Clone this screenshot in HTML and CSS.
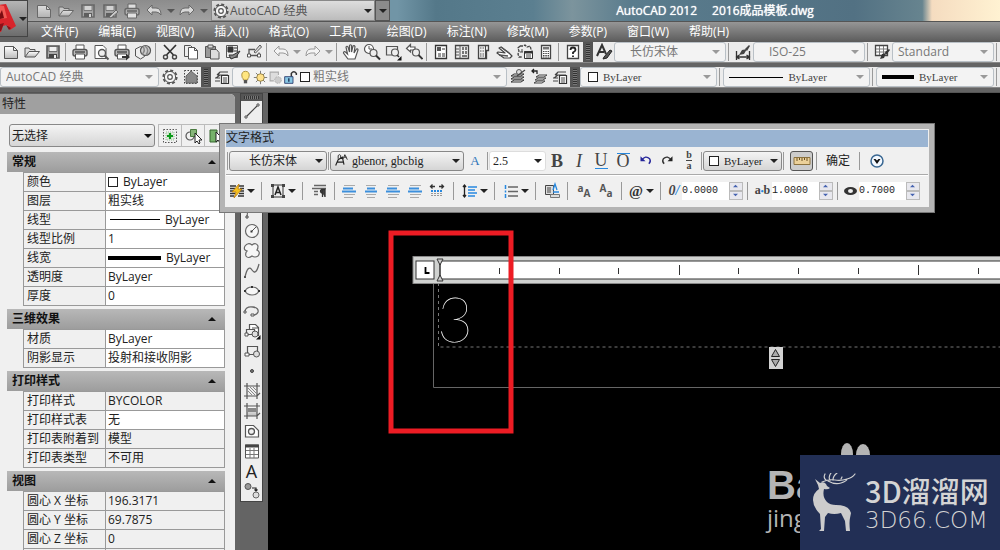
FILE: index.html
```html
<!DOCTYPE html>
<html lang="zh-CN">
<head>
<meta charset="utf-8">
<title>AutoCAD 2012 - 2016成品模板.dwg</title>
<link rel="stylesheet" href="styles.css">
</head>
<body>
<svg class="defs" aria-hidden="true">
  <defs>
    <linearGradient id="gGray" x1="0" y1="0" x2="0" y2="1"><stop offset="0" stop-color="#fff"/><stop offset="1" stop-color="#bbb"/></linearGradient>
  </defs>
  <symbol id="new" viewBox="0 0 18 18"><path d="M2.500 3.500h9l4 4v8h-13z" fill="url(#gGray)" stroke="currentColor"/><path d="M11.500 3.500v4h4" fill="none" stroke="currentColor"/></symbol>
  <symbol id="open" viewBox="0 0 18 18"><path d="M2 14V5h4l1 1.500h5V9" fill="#ddd" stroke="currentColor"/><path d="M2 14l4-5.500h10.500L12 14z" fill="url(#gGray)" stroke="currentColor"/></symbol>
  <symbol id="save" viewBox="0 0 18 18"><path d="M3 3h12v12H3z" fill="#aaa" stroke="currentColor" stroke-width="1.600"/><path d="M5 3.500h8v5H5z" fill="#eee" stroke="currentColor" stroke-width=".8"/><path d="M5 11h8v4H5z" fill="#444"/><path d="M10 12h2v3h-2z" fill="#eee"/></symbol>
  <symbol id="saveas" viewBox="0 0 18 18"><use href="#save"/><path d="M8 15l7-7 2 2-7 6z" fill="#ddd" stroke="currentColor"/></symbol>
  <symbol id="print" viewBox="0 0 18 18"><path d="M5 7V2h8v5" fill="#fff" stroke="currentColor"/><rect x="2" y="6.500" width="14" height="6.500" rx="2" fill="#bbb" stroke="currentColor" stroke-width="1.400"/><path d="M4.500 11h9v5h-9z" fill="#fff" stroke="currentColor"/><path d="M4 9h10" stroke="currentColor" stroke-width="1.600"/></symbol>
  <symbol id="preview" viewBox="0 0 18 18"><path d="M3 2.500h8l3 3v10H3z" fill="#fff" stroke="currentColor"/><circle cx="10" cy="10" r="3.500" fill="#eee" stroke="currentColor" stroke-width="1.300"/><path d="M12.500 12.500l4 4" stroke="currentColor" stroke-width="2"/></symbol>
  <symbol id="plot" viewBox="0 0 18 18"><use href="#print"/><path d="M9 13h4v-2.500l4 3.500-4 3.500V15H9z" fill="#333"/></symbol>
  <symbol id="globe" viewBox="0 0 18 18"><path d="M1.500 6l5-2.500 4 2v8l-4 2.500-5-3z" fill="#eee" stroke="currentColor"/><circle cx="11.500" cy="7.500" r="5" fill="#ccc" stroke="currentColor" stroke-width="1.200"/><path d="M9 3.500q3 4-1 8M11 3q5 4 1 9" fill="none" stroke="#888" stroke-width="1.500"/></symbol>
  <symbol id="cut" viewBox="0 0 18 18"><path d="M3 2l9.500 10M15 2L5.500 12" stroke="#333" stroke-width="1.700"/><circle cx="4.500" cy="14" r="2" fill="none" stroke="#444" stroke-width="1.400"/><circle cx="13.500" cy="14" r="2" fill="none" stroke="#444" stroke-width="1.400"/></symbol>
  <symbol id="copy" viewBox="0 0 18 18"><path d="M2.500 2.500h6l3 3v8h-9z" fill="#eee" stroke="currentColor"/><path d="M6.500 4.500h6l3 3v8.500h-9z" fill="#fff" stroke="currentColor"/><path d="M12.500 4.500v3h3" fill="none" stroke="currentColor"/></symbol>
  <symbol id="paste" viewBox="0 0 18 18"><path d="M2.500 3.500h10v11h-10z" fill="#999" stroke="currentColor"/><path d="M5 2h5v3H5z" fill="#ddd" stroke="currentColor"/><path d="M7.500 6.500h6l2.500 3v6.500H7.500z" fill="#ddd" stroke="currentColor"/></symbol>
  <symbol id="match" viewBox="0 0 18 18"><path d="M2.500 2.500h11v12h-11z" fill="#eee" stroke="currentColor"/><path d="M4 4h5v5H4zM10 5h3M10 8h3" fill="#333" stroke="#333"/><path d="M5 12h4l7-4-4 6-5 2z" fill="#888" stroke="#333"/></symbol>
  <symbol id="block" viewBox="0 0 18 18"><path d="M10 6.500H4v6h10v-3" fill="none" stroke="currentColor" stroke-width="1.300"/><path d="M2.500 11h3v3h-3zM12.500 11h3v3h-3z" fill="#fff" stroke="currentColor"/><path d="M9 9l6-7 1.500 2-6 6z" fill="#ddd" stroke="currentColor"/></symbol>
  <symbol id="undo" viewBox="0 0 18 18"><path d="M2 8l5-5v3h4q5 0 5 7-2-3-5-3H7v3z" fill="#f4f4f4" stroke="currentColor" stroke-linejoin="round"/></symbol>
  <symbol id="redo" viewBox="0 0 18 18"><path d="M16 8l-5-5v3H7q-5 0-5 7 2-3 5-3h4v3z" fill="#f4f4f4" stroke="currentColor" stroke-linejoin="round"/></symbol>
  <symbol id="hand" viewBox="0 0 18 18"><path d="M6 16l-4.500-6q0-2 2-1l2 2L4 4q1-1.500 2 0l1.500 5V2.500q1-1.500 2 0V9L11 3q1-1 2 .5L12 10l2.500-4q1.500-.5 1.500 1L13 16z" fill="#fff" stroke="currentColor" stroke-width="1.200"/></symbol>
  <symbol id="zoomrt" viewBox="0 0 18 18"><circle cx="6" cy="6" r="4.500" fill="#fff" stroke="currentColor" stroke-width="1.200"/><path d="M6 3v3h3" fill="none" stroke="currentColor"/><circle cx="10.500" cy="10" r="3.500" fill="#eee" stroke="currentColor" stroke-width="1.200"/><path d="M13 12.500l4 4" stroke="#333" stroke-width="2"/></symbol>
  <symbol id="zoomwin" viewBox="0 0 18 18"><path d="M8 12H2.500V3.500h11V7" fill="none" stroke="currentColor" stroke-width="1.200"/><circle cx="11" cy="9.500" r="3.500" fill="#eee" stroke="currentColor" stroke-width="1.200"/><path d="M13 12l2 2" stroke="#333" stroke-width="1.600"/><path d="M17.500 13v4.500H13z" fill="#111"/></symbol>
  <symbol id="zoomprev" viewBox="0 0 18 18"><path d="M1.500 5.500l4-4V4H10v3H5.500v2z" fill="#fff" stroke="currentColor" stroke-width="1.200"/><circle cx="11" cy="9.500" r="3.500" fill="#eee" stroke="currentColor" stroke-width="1.200"/><path d="M13.500 12l4 4" stroke="#333" stroke-width="1.800"/></symbol>
  <symbol id="props" viewBox="0 0 18 18"><path d="M3.500 2.500h11v13h-11z" fill="#fff" stroke="#333" stroke-width="1.300"/><path d="M5 4h4v4H5z" fill="#555"/><path d="M10 6h3M6 11h3M10 11h3M6 13h3M10 13h3" stroke="#333"/></symbol>
  <symbol id="dcenter" viewBox="0 0 18 18"><path d="M2.500 2.500h13v13h-13z" fill="#eee" stroke="#444" stroke-width="1.300"/><path d="M7 3v12M3 6h3M3 9h3M3 12h3" stroke="#555"/><path d="M9 4h2v3H9zM12 4h2v3h-2zM9 8h2v3H9zM12 8h2v3h-2zM9 12h5v2H9z" fill="#777"/></symbol>
  <symbol id="palettes" viewBox="0 0 18 18"><path d="M4.500 2.500h10v5h-2v8h-8z" fill="#eee" stroke="#444" stroke-width="1.300"/><path d="M6 5h5M6 8h5M6 11h5M6 13h5" stroke="#555" stroke-dasharray="1.500 1"/><path d="M11.500 3v12" stroke="#444"/></symbol>
  <symbol id="sheet" viewBox="0 0 18 18"><path d="M2 10l7 5h6l2-2-3-3-8-6-2 1 6 5-7-1z" fill="#fff" stroke="#444" stroke-width="1.200" stroke-linejoin="round"/><path d="M6 4l8 6M4 12l9 1" stroke="#555" stroke-width="1.500"/></symbol>
  <symbol id="markup" viewBox="0 0 18 18"><path d="M4 3h3l2-1 2 2 3-1 1 3 1 2-1 2M4 3L2 5l1 3-1 3 1 3h3" fill="none" stroke="#444" stroke-width="1.300" stroke-dasharray="3 1"/><path d="M8.500 8.500h8v7h-8z" fill="#fff" stroke="#333"/><path d="M8 9.500h9" stroke="#333" stroke-width="2"/><path d="M10 12h5M10 14h5M4 9h3M6 6v3" stroke="#444"/></symbol>
  <symbol id="calc" viewBox="0 0 18 18"><path d="M4.500 2.500h9v13h-9z" fill="#fff" stroke="#444" stroke-width="1.300"/><path d="M6 4h6v2.500H6z" fill="#777"/><path d="M6 8.500h6M6 10.500h6M6 12.500h6M6 14h6" stroke="#444" stroke-width="1.200" stroke-dasharray="1.500 .8"/></symbol>
  <symbol id="help" viewBox="0 0 18 18"><path d="M3.500 2.500h11v13h-11z" fill="#fff" stroke="#444" stroke-width="1.300"/><path d="M6.500 7q0-2.500 2.500-2.500T11.500 7Q11.500 8 9 9.500V11M9 12.500V14" fill="none" stroke="#222" stroke-width="1.800"/></symbol>
  <symbol id="brushA" viewBox="0 0 18 18"><path d="M2 13L7 2l4 9M4 9h5" fill="none" stroke="#333" stroke-width="2"/><path d="M9 14l6-7 2 1-5 7-4 1z" fill="#555" stroke="#222"/></symbol>
  <symbol id="dimstyle" viewBox="0 0 18 18"><path d="M2.500 8v9M15.500 8v9M3 14h12M5.500 12l-3 2 3 2M12.500 12l3 2-3 2" fill="none" stroke="#333" stroke-width="1.300"/><path d="M5 12l3-5 5-1-3 5zM11 6l4-4 1 1-3 5z" fill="#444"/></symbol>
  <symbol id="tabstyle" viewBox="0 0 18 18"><path d="M2.500 2.500h12v10h-12z" fill="#fff" stroke="#444" stroke-width="1.300"/><path d="M3 6h11M3 9h11M6.500 3v9M10.500 3v9" stroke="#777"/><path d="M7 16l2-5 4-1-2 5zM12 9l4-3 1 1-4 5z" fill="#333"/></symbol>
  <symbol id="gear" viewBox="0 0 18 18"><circle cx="9" cy="9" r="6.600" fill="none" stroke="currentColor" stroke-width="2" stroke-dasharray="3 2.180"/><circle cx="9" cy="9" r="5.600" fill="#f4f4f4" stroke="currentColor"/><circle cx="9" cy="9" r="2.300" fill="#fff" stroke="currentColor" stroke-width="1.200"/></symbol>
  <symbol id="wshome" viewBox="0 0 18 18"><path d="M2.500 2.500h13v13h-13z" fill="none" stroke="#444" stroke-dasharray="1.500 1.500"/><path d="M4 8l5-5 6 5v7H4z" fill="#888" stroke="#666"/></symbol>
  <symbol id="layers" viewBox="0 0 18 18"><path d="M2 13h5M3 10l4-3h8M2 10h5M4 7l3-3h8M4 7h4M7 4L5 7" fill="none" stroke="#444" stroke-width="1.200"/><path d="M8.500 7.500h7v8h-7z" fill="#fff" stroke="#333" stroke-width="1.200"/><path d="M10 10h4M10 12h4M10 14h4" stroke="#444"/></symbol>
  <symbol id="layprev" viewBox="0 0 18 18"><path d="M2 8l3-2h10l-3 2zM2 11l3-2h10l-3 2zM2 14l3-2h10l-3 2z" fill="#eee" stroke="#333"/><circle cx="10" cy="4" r="2.500" fill="#ddd" stroke="#555"/><path d="M8 8l8-6" stroke="#444" stroke-width="1.200"/></symbol>
  <symbol id="layback" viewBox="0 0 18 18"><path d="M6 9l3-2h8l-3 2zM5 12l3-2h8l-3 2zM4 15l3-2h8l-3 2z" fill="#eee" stroke="#444"/><path d="M2 3h5v3M4 1L2 3l2 2" fill="none" stroke="#222" stroke-width="1.300"/></symbol>
  <symbol id="bulb" viewBox="0 0 18 18"><path d="M6.500 12Q6.500 10.500 5 9 3 2 9 1.500 15 2 13 9 11.500 10.500 11.500 12z" fill="#ffe680" stroke="#a08430"/><path d="M7 12h4v4H7z" fill="#555"/></symbol>
  <symbol id="sun" viewBox="0 0 18 18"><path d="M9 1v16M1 9h16M3.500 3.500l11 11M14.500 3.500l-11 11" stroke="#666"/><circle cx="9" cy="9" r="4.500" fill="#ffe18a" stroke="#8a7638"/></symbol>
  <symbol id="vp" viewBox="0 0 18 18"><path d="M7 13H2.500V2.500h10V6" fill="#ddd" stroke="#aaa" stroke-width="1.300"/><circle cx="12" cy="12" r="4" fill="#ccc" stroke="#aaa" stroke-dasharray="2 1"/></symbol>
  <symbol id="lock" viewBox="0 0 18 18"><path d="M10 8V4q3-4 6 0v2" fill="none" stroke="#333" stroke-width="1.800"/><path d="M2 8h10v8H2z" fill="#87c6e4" stroke="#236"/><path d="M7 10v4" stroke="#124" stroke-width="1.500"/></symbol>
  <symbol id="down" viewBox="0 0 8 6"><path d="M0 1h8L4 5z" fill="currentColor"/></symbol>
  <symbol id="up" viewBox="0 0 8 6"><path d="M0 5h8L4 1z" fill="currentColor"/></symbol>
  <symbol id="line" viewBox="0 0 18 18"><path d="M4 14L14 4" stroke="#444" stroke-width="1.200"/><path d="M2 14h2v2H2zM14 2h2v2h-2z" fill="#fff" stroke="#555"/></symbol>
  <symbol id="box" viewBox="0 0 18 18"><path d="M4 4h10v10H4z" fill="none" stroke="#444"/><path d="M3 13h2v2H3z" fill="#fff" stroke="#444"/></symbol>
  <symbol id="arc" viewBox="0 0 18 18"><path d="M4 14Q4 4 14 3" fill="none" stroke="#555"/><path d="M3 14h2v2H3z" fill="#fff" stroke="#444"/></symbol>
  <symbol id="circle" viewBox="0 0 18 18"><circle cx="9" cy="9" r="6.500" fill="#f6f6f6" stroke="#666" stroke-width="1.200"/><path d="M9 9l4-4" stroke="#555"/><path d="M7.500 8.500h2v2h-2z" fill="#333"/></symbol>
  <symbol id="cloud" viewBox="0 0 18 18"><path d="M9 3q4-3 6 1 0 3-1 4 4 2 1 6-3 2-6 0-4 3-6 0-1-3 1-5-4-1-2-5 3-4 7-1z" fill="#f6f6f6" stroke="#666" stroke-width="1.200"/></symbol>
  <symbol id="spline" viewBox="0 0 18 18"><path d="M2 15Q5 2 9 8t7-6" fill="none" stroke="#666" stroke-width="1.300"/><path d="M1 14h2v2H1z" fill="#555"/></symbol>
  <symbol id="ellipse" viewBox="0 0 18 18"><ellipse cx="9" cy="9" rx="6.500" ry="4" fill="#f6f6f6" stroke="#666" stroke-width="1.200"/><path d="M1 8h2v2H1zM15 8h2v2h-2zM8 4h2v2H8z" fill="#333"/></symbol>
  <symbol id="earc" viewBox="0 0 18 18"><path d="M2 9Q3 4 10 5q6 1 5 5-1 3-5 3" fill="none" stroke="#666" stroke-width="1.300"/><path d="M1 9h2v2H1zM8 12h3v2H8z" fill="#fff" stroke="#555"/></symbol>
  <symbol id="insert" viewBox="0 0 18 18"><path d="M6.500 7V2.500h6l3 3V14M9 6h6" fill="#fff" stroke="#555" stroke-width="1.200"/><path d="M3.500 7.500h8v5h-8z" fill="#eee" stroke="#555" stroke-width="1.200"/><path d="M2 11h3v3H2z" fill="#fff" stroke="#555"/><circle cx="12" cy="12" r="3" fill="#ddd" stroke="#555"/><path d="M17.500 13v4.500H13z" fill="#111"/></symbol>
  <symbol id="makeblk" viewBox="0 0 18 18"><path d="M4.500 4.500h10v8h-10z" fill="#eee" stroke="#555" stroke-width="1.200"/><path d="M2 11h4v3H2z" fill="#fff" stroke="#555"/><circle cx="13.500" cy="12" r="3" fill="#ddd" stroke="#555"/></symbol>
  <symbol id="point" viewBox="0 0 18 18"><circle cx="9" cy="9" r="1.500" fill="#777" stroke="#444"/></symbol>
  <symbol id="hatch" viewBox="0 0 18 18"><path d="M1 4h16M4 1v16M1 14h13l3-3M14 1v16" fill="none" stroke="#555" stroke-width="1.200"/><path d="M5 6l7 7M5 9l4 4M7 5l7 7M10 5l4 4" stroke="#888"/></symbol>
  <symbol id="gradient" viewBox="0 0 18 18"><path d="M4 4h10v10H4z" fill="url(#gGray)"/><path d="M5 6h8v4H5z" fill="#888"/><path d="M1 4h16M4 1v16M1 14h13l3-3M14 1v16" fill="none" stroke="#555" stroke-width="1.200"/></symbol>
  <symbol id="region" viewBox="0 0 18 18"><path d="M2.500 3.500h8l5 5V15h-13z" fill="#fff" stroke="#555" stroke-width="1.200"/><circle cx="8.500" cy="9.500" r="3" fill="#f0f0f0" stroke="#555" stroke-width="1.300"/></symbol>
  <symbol id="table" viewBox="0 0 18 18"><path d="M2.500 3v13h13V3z" fill="#fff" stroke="#555"/><path d="M2 4h14" stroke="#444" stroke-width="3"/><path d="M3 8.500h12M3 12.500h12M7 6v10M11 6v10" stroke="#777"/></symbol>
  <symbol id="addsel" viewBox="0 0 18 18"><circle cx="5" cy="4.500" r="3" fill="#999" stroke="#555"/><circle cx="13" cy="13" r="3" fill="#ddd" stroke="#666"/><path d="M9 6h4v3M11.500 7.500L13 9l1.500-1.500" fill="none" stroke="#222" stroke-width="1.200"/></symbol>
  <symbol id="pickadd" viewBox="0 0 18 18"><path d="M2.500 2.500h13v13h-13z" fill="none" stroke="#555" stroke-dasharray="1.500 1.500"/><path d="M5 5h8v8H5z" fill="#dfeadb" stroke="#9b9" stroke-dasharray="1 1"/><path d="M9 6v6M6 9h6" stroke="#0a9a18" stroke-width="2.200"/></symbol>
  <symbol id="selobj" viewBox="0 0 18 18"><circle cx="6" cy="9" r="4" fill="none" stroke="#555" stroke-width="1.200"/><path d="M6.500 2.500h6v7h-6z" fill="#86b679" stroke="#4a7a40"/><path d="M11 6v10l2-2 2 3 1-1-1-3h3z" fill="#fff" stroke="#222"/></symbol>
  <symbol id="qsel" viewBox="0 0 18 18"><path d="M3 3h7v12H3z" fill="#76b26a" stroke="#37682e"/><path d="M9 5v10l2-2 2 3 1-1-1-3h3z" fill="#fff" stroke="#222"/><path d="M13 2l3 3" stroke="#e8932a" stroke-width="2"/></symbol>
  <symbol id="bolt" viewBox="0 0 18 18"><path d="M2 4h6M11 4h5M2 6.500h5M12 6.500h4M2 9h4M12 9h4M2 11.500h5M11 11.500h5M2 14h4M10 14h6" stroke="#333" stroke-width="1.500"/><path d="M11 2L4 10h4l-2 6 8-9h-4z" fill="#f5c11e" stroke="#b8780b" stroke-width=".8"/></symbol>
  <symbol id="frameA" viewBox="0 0 18 18"><path d="M4 3h10v12H4z" fill="#eee" stroke="#333"/><path d="M2 2h3v3H2zM13 2h3v3h-3zM2 13h3v3H2zM13 13h3v3h-3z" fill="#444"/><path d="M6 13l3-8 3 8M7 10.500h4" fill="none" stroke="#222" stroke-width="1.500"/></symbol>
  <symbol id="para" viewBox="0 0 18 18"><path d="M4 3.500h12M2 6.500h14M4 9.500h4M4 12.500h4" stroke="#666" stroke-width="1.300"/><path d="M12.500 15V8M15 15V7.500h-3.500q-2.500 2 1 4" fill="#444" stroke="#333" stroke-width="1.300"/></symbol>
  <symbol id="al-l" viewBox="0 0 18 18"><path d="M4 3.500h11M4 12.500h11M4 15.500h9" stroke="#aaa" stroke-width="1.200"/><path d="M3 6.500h10M2 9.500h14" stroke="#3c8fdc" stroke-width="1.800"/></symbol>
  <symbol id="al-c" viewBox="0 0 18 18"><path d="M4 3.500h10M4 12.500h10M5 15.500h8" stroke="#aaa" stroke-width="1.200"/><path d="M5 6.500h8M3 9.500h12" stroke="#3c8fdc" stroke-width="1.800"/></symbol>
  <symbol id="dist" viewBox="0 0 18 18"><path d="M3 4.500h4M11 4.500h4M4.500 2.500l-2 2 2 2M13.500 2.500l2 2-2 2" fill="none" stroke="#333" stroke-width="1.300"/><path d="M3 9h12" stroke="#2788df" stroke-width="2" stroke-dasharray="2 1"/><path d="M3 11.500h12M3 13.500h12" stroke="#999" stroke-dasharray="2 1"/></symbol>
  <symbol id="spacing" viewBox="0 0 18 18"><path d="M3.500 4v10M2 5l1.500-2L5 5M2 13l1.500 2L5 13" fill="none" stroke="#222" stroke-width="1.300"/><path d="M7 5h9M7 8h7M7 11h9M7 14h7" stroke="#2788df" stroke-width="1.300"/></symbol>
  <symbol id="list" viewBox="0 0 18 18"><path d="M3.500 3v4M3.500 8.500v2M3.500 12v4" stroke="#2788df" stroke-width="1.500"/><path d="M6 5h10M6 9.500h10M6 14h10" stroke="#666" stroke-width="1.300"/></symbol>
  <symbol id="field" viewBox="0 0 18 18"><path d="M2.500 3.500h8v9h-8z" fill="#ddd" stroke="#444"/><path d="M4 6h4M4 8h4M4 10h4" stroke="#444"/><path d="M10 8l2-6 2 6M10 10h6" fill="none" stroke="#2788df" stroke-width="1.300"/><path d="M7.500 12.500h9v3h-9z" fill="#ddd" stroke="#777"/></symbol>
  <symbol id="curvel" viewBox="0 0 18 18"><path d="M4 9Q9 2 14 7q2 3-1 6" fill="none" stroke="#25259a" stroke-width="1.600"/><path d="M3 4v6h6z" fill="#25259a"/></symbol>
  <symbol id="curver" viewBox="0 0 18 18"><path d="M14 9Q9 2 4 7q-2 3 1 6" fill="none" stroke="#333" stroke-width="1.600"/><path d="M15 4v6H9z" fill="#222"/></symbol>
  <symbol id="ruler" viewBox="0 0 18 18"><path d="M1 5.500h16v7H1z" fill="#ecd19a" stroke="#8c7340"/><path d="M4 6v3M6.500 6v2M9 6v3M11.500 6v2M14 6v3" stroke="#6a5224"/></symbol>
  <symbol id="opts" viewBox="0 0 18 18"><circle cx="9" cy="9" r="6" fill="#f4f9ff" stroke="#396792" stroke-width="1.500"/><path d="M5.500 7h2L9 8.500 10.500 7h2L9 12z" fill="#111"/></symbol>
  <symbol id="shx" viewBox="0 0 18 18"><path d="M2 15q2-5 3-7l5-3 2 9M4 11h7" fill="none" stroke="#222" stroke-width="1.400"/><path d="M5 7V3q2-2 3 0v3M11 7l2-5 3 6M12 5h3" fill="none" stroke="#333" stroke-width="1.200"/></symbol>
</svg>

<header class="top">
  <button class="logo" aria-label="应用程序菜单">
    <svg class="logo-a" viewBox="0 0 16 36" aria-hidden="true"><path d="M-8 31L-1 4l7-1 10 22-6 4-3-5-4 1-2 6z" fill="#d8242b"/><path d="M-1 4l5 1 3 12-8 1z" fill="#f05a55"/><path d="M0 13l2-4 2 8-4 1z" fill="#7b0c12"/><path d="M6 24l5 3-2 2zM0 23l4-1-3 8H0z" fill="#8a1118"/></svg>
    <svg class="arr"><use href="#down"/></svg>
  </button>
  <div class="titlebar">
    <div class="qat">
      <button aria-label="新建"><svg class="ic"><use href="#new"/></svg></button>
      <button aria-label="打开"><svg class="ic"><use href="#open"/></svg></button>
      <button aria-label="保存"><svg class="ic"><use href="#save"/></svg></button>
      <button aria-label="另存为"><svg class="ic"><use href="#saveas"/></svg></button>
      <button aria-label="打印"><svg class="ic"><use href="#print"/></svg></button>
      <button aria-label="放弃"><svg class="ic"><use href="#undo"/></svg></button>
      <button class="slim" aria-label="放弃列表"><svg class="arr"><use href="#down"/></svg></button>
      <button aria-label="重做"><svg class="ic"><use href="#redo"/></svg></button>
      <button class="slim" aria-label="重做列表"><svg class="arr"><use href="#down"/></svg></button>
    </div>
    <div class="combo ws-top"><svg class="ic"><use href="#gear"/></svg><select aria-label="工作空间"><option>AutoCAD 经典</option></select><svg class="arr"><use href="#down"/></svg></div>
    <button class="qat-more" aria-label="自定义"><svg class="arr"><use href="#down"/></svg></button>
    <h1 class="title"><span>AutoCAD 2012</span><span>2016成品模板.dwg</span></h1>
  </div>
  <nav class="menu">
    <button>文件(F)</button><button>编辑(E)</button><button>视图(V)</button><button>插入(I)</button><button>格式(O)</button><button>工具(T)</button><button>绘图(D)</button><button>标注(N)</button><button>修改(M)</button><button>参数(P)</button><button>窗口(W)</button><button>帮助(H)</button>
  </nav>
</header>

<div class="bar">
  <button aria-label="新建"><svg class="ic"><use href="#new"/></svg></button>
  <button aria-label="打开"><svg class="ic"><use href="#open"/></svg></button>
  <button aria-label="保存"><svg class="ic"><use href="#save"/></svg></button>
  <i class="sep"></i>
  <button aria-label="打印"><svg class="ic"><use href="#print"/></svg></button>
  <button aria-label="打印预览"><svg class="ic"><use href="#preview"/></svg></button>
  <button aria-label="发布"><svg class="ic"><use href="#plot"/></svg></button>
  <button aria-label="三维DWF"><svg class="ic"><use href="#globe"/></svg></button>
  <i class="sep"></i>
  <button aria-label="剪切"><svg class="ic"><use href="#cut"/></svg></button>
  <button aria-label="复制"><svg class="ic"><use href="#copy"/></svg></button>
  <button aria-label="粘贴"><svg class="ic"><use href="#paste"/></svg></button>
  <button aria-label="特性匹配"><svg class="ic"><use href="#match"/></svg></button>
  <button aria-label="块编辑器"><svg class="ic"><use href="#block"/></svg></button>
  <i class="sep"></i>
  <button class="off" aria-label="放弃"><svg class="ic"><use href="#undo"/></svg></button>
  <button class="slim off" aria-label="放弃列表"><svg class="arr"><use href="#down"/></svg></button>
  <button class="off" aria-label="重做"><svg class="ic"><use href="#redo"/></svg></button>
  <button class="slim off" aria-label="重做列表"><svg class="arr"><use href="#down"/></svg></button>
  <i class="sep"></i>
  <button aria-label="平移"><svg class="ic"><use href="#hand"/></svg></button>
  <button aria-label="实时缩放"><svg class="ic"><use href="#zoomrt"/></svg></button>
  <button aria-label="窗口缩放"><svg class="ic"><use href="#zoomwin"/></svg></button>
  <button aria-label="缩放上一个"><svg class="ic"><use href="#zoomprev"/></svg></button>
  <i class="sep"></i>
  <button aria-label="特性"><svg class="ic"><use href="#props"/></svg></button>
  <button aria-label="设计中心"><svg class="ic"><use href="#dcenter"/></svg></button>
  <button aria-label="工具选项板"><svg class="ic"><use href="#palettes"/></svg></button>
  <button aria-label="图纸集"><svg class="ic"><use href="#sheet"/></svg></button>
  <button aria-label="标记集"><svg class="ic"><use href="#markup"/></svg></button>
  <button aria-label="计算器"><svg class="ic"><use href="#calc"/></svg></button>
  <i class="sep"></i>
  <button aria-label="帮助"><svg class="ic"><use href="#help"/></svg></button>
  <i class="grip"></i>
  <button aria-label="文字样式"><svg class="ic"><use href="#brushA"/></svg></button>
  <div class="combo grow pad"><select aria-label="文字样式"><option>长仿宋体</option></select><svg class="arr"><use href="#down"/></svg></div>
  <i class="sep"></i>
  <button aria-label="标注样式"><svg class="ic"><use href="#dimstyle"/></svg></button>
  <div class="combo grow pad"><select aria-label="标注样式"><option>ISO-25</option></select><svg class="arr"><use href="#down"/></svg></div>
  <i class="sep"></i>
  <button aria-label="表格样式"><svg class="ic"><use href="#tabstyle"/></svg></button>
  <div class="combo grow"><select aria-label="表格样式"><option>Standard</option></select><svg class="arr"><use href="#down"/></svg></div>
  <i class="sep"></i>
</div>

<div class="bar">
  <div class="combo ws"><select aria-label="工作空间"><option>AutoCAD 经典</option></select><svg class="arr"><use href="#down"/></svg></div>
  <button aria-label="工作空间设置"><svg class="ic"><use href="#gear"/></svg></button>
  <button aria-label="我的工作空间"><svg class="ic"><use href="#wshome"/></svg></button>
  <i class="grip"></i>
  <button aria-label="图层特性"><svg class="ic"><use href="#layers"/></svg></button>
  <div class="combo layer"><svg class="ic sm"><use href="#bulb"/></svg><svg class="ic sm"><use href="#sun"/></svg><svg class="ic sm"><use href="#vp"/></svg><svg class="ic sm"><use href="#lock"/></svg><i class="swatch"></i><select aria-label="图层"><option>粗实线</option></select><svg class="arr"><use href="#down"/></svg></div>
  <button aria-label="置为当前图层"><svg class="ic"><use href="#layprev"/></svg></button>
  <button aria-label="上一个图层"><svg class="ic"><use href="#layback"/></svg></button>
  <button aria-label="图层状态"><svg class="ic"><use href="#layers"/></svg></button>
  <i class="grip"></i>
  <div class="combo grow c-color song"><i class="swatch"></i><select aria-label="颜色"><option>ByLayer</option></select><svg class="arr"><use href="#down"/></svg></div>
  <i class="sep"></i>
  <div class="combo grow c-type song"><i class="rule wide"></i><select aria-label="线型"><option>ByLayer</option></select><svg class="arr"><use href="#down"/></svg></div>
  <i class="sep"></i>
  <div class="combo grow c-weight song"><i class="rule thick short"></i><select aria-label="线宽"><option>ByLayer</option></select><svg class="arr"><use href="#down"/></svg></div>
  <i class="sep"></i>
</div>

<main class="work">
  <aside class="props">
    <h2>特性</h2>
    <div class="pick">
      <div class="combo raised"><select aria-label="选择对象"><option>无选择</option></select><svg class="arr"><use href="#down"/></svg></div>
      <button aria-label="切换PICKADD"><svg class="ic"><use href="#pickadd"/></svg></button>
      <button aria-label="选择对象"><svg class="ic"><use href="#selobj"/></svg></button>
      <button aria-label="快速选择"><svg class="ic"><use href="#qsel"/></svg></button>
    </div>
    <section>
      <h3>常规<svg class="arr"><use href="#up"/></svg></h3>
      <table>
        <tr><th scope="row">颜色</th><td><i class="swatch"></i>ByLayer</td></tr>
        <tr><th scope="row">图层</th><td>粗实线</td></tr>
        <tr><th scope="row">线型</th><td><i class="rule"></i>ByLayer</td></tr>
        <tr><th scope="row">线型比例</th><td>1</td></tr>
        <tr><th scope="row">线宽</th><td><i class="rule thick"></i>ByLayer</td></tr>
        <tr><th scope="row">透明度</th><td>ByLayer</td></tr>
        <tr><th scope="row">厚度</th><td>0</td></tr>
      </table>
    </section>
    <section>
      <h3>三维效果<svg class="arr"><use href="#up"/></svg></h3>
      <table>
        <tr><th scope="row">材质</th><td>ByLayer</td></tr>
        <tr><th scope="row">阴影显示</th><td>投射和接收阴影</td></tr>
      </table>
    </section>
    <section>
      <h3>打印样式<svg class="arr"><use href="#up"/></svg></h3>
      <table>
        <tr><th scope="row">打印样式</th><td class="ro">BYCOLOR</td></tr>
        <tr><th scope="row">打印样式表</th><td>无</td></tr>
        <tr><th scope="row">打印表附着到</th><td class="ro">模型</td></tr>
        <tr><th scope="row">打印表类型</th><td class="ro">不可用</td></tr>
      </table>
    </section>
    <section>
      <h3>视图<svg class="arr"><use href="#up"/></svg></h3>
      <table>
        <tr><th scope="row">圆心 X 坐标</th><td class="ro">196.3171</td></tr>
        <tr><th scope="row">圆心 Y 坐标</th><td class="ro">69.7875</td></tr>
        <tr><th scope="row">圆心 Z 坐标</th><td class="ro">0</td></tr>
        <tr><th scope="row"></th><td class="ro"></td></tr>
      </table>
    </section>
  </aside>

  <div class="draw">
    <i class="hgrip"></i>
    <button aria-label="直线"><svg class="ic"><use href="#line"/></svg></button>
    <button aria-label="构造线"><svg class="ic"><use href="#line"/></svg></button>
    <button aria-label="多段线"><svg class="ic"><use href="#spline"/></svg></button>
    <button aria-label="多边形"><svg class="ic"><use href="#circle"/></svg></button>
    <button aria-label="矩形"><svg class="ic"><use href="#box"/></svg></button>
    <button aria-label="圆弧"><svg class="ic"><use href="#arc"/></svg></button>
    <button aria-label="圆"><svg class="ic"><use href="#circle"/></svg></button>
    <button aria-label="修订云线"><svg class="ic"><use href="#cloud"/></svg></button>
    <button aria-label="样条曲线"><svg class="ic"><use href="#spline"/></svg></button>
    <button aria-label="椭圆"><svg class="ic"><use href="#ellipse"/></svg></button>
    <button aria-label="椭圆弧"><svg class="ic"><use href="#earc"/></svg></button>
    <button aria-label="插入块"><svg class="ic"><use href="#insert"/></svg></button>
    <button aria-label="创建块"><svg class="ic"><use href="#makeblk"/></svg></button>
    <button aria-label="点"><svg class="ic"><use href="#point"/></svg></button>
    <button aria-label="图案填充"><svg class="ic"><use href="#hatch"/></svg></button>
    <button aria-label="渐变色"><svg class="ic"><use href="#gradient"/></svg></button>
    <button aria-label="面域"><svg class="ic"><use href="#region"/></svg></button>
    <button aria-label="表格"><svg class="ic"><use href="#table"/></svg></button>
    <button class="txt" aria-label="多行文字">A</button>
    <button aria-label="添加选定对象"><svg class="ic"><use href="#addsel"/></svg></button>
  </div>

  <div class="canvas">
    <svg class="drawing" aria-hidden="true">
      <path d="M165.500 190v104.500H2000" fill="none" stroke="#666"/>
      <path d="M170.500 190v64H2000" fill="none" stroke="#777" stroke-dasharray="3 3"/>
      <text x="169" y="249" class="cad-text">3</text>
      <rect x="145" y="163.500" width="2000" height="27" fill="#d0d2d0" stroke="#888"/>
      <rect x="148" y="168" width="18" height="18" fill="#fff" stroke="#333"/>
      <path d="M157.500 174v6h4" fill="none" stroke="#000" stroke-width="1.800"/>
      <rect x="172" y="168" width="2000" height="18" fill="#fff" stroke="#333"/>
      <path d="M231.500 175v6M291.500 175v6M350.500 175v6M470.500 175v6M530.500 175v6M590.500 175v6M710.500 175v6M769.500 175v6M829.500 175v6" stroke="#333"/>
      <path d="M411.500 172v10M650.500 172v10" stroke="#333"/>
      <path d="M169 166h6l-3 6zM169 188h6l-3-6zM172 171v12" fill="#ccc" stroke="#333"/>
      <rect x="501" y="254" width="14" height="22" fill="#d2d2d2"/>
      <path d="M503.500 263.500h8l-4-7zM503.500 266.500h8l-4 7z" fill="#aaa" stroke="#222"/>
      <rect x="123" y="140" width="120" height="198" fill="none" stroke="#ed1c24" stroke-width="5"/>
    </svg>
    <div class="watermark">
      <svg class="paw" viewBox="0 0 32 24" aria-hidden="true"><ellipse cx="8" cy="12" rx="6" ry="11" fill="#b4b4b4"/><ellipse cx="24" cy="13" rx="7" ry="11" fill="#b4b4b4"/></svg>
      <div class="wm-big">Bai</div>
      <div class="wm-small">jingyan</div>
    </div>
    <div class="brand">
      <svg class="deer" viewBox="0 0 44 60" aria-hidden="true">
        <g fill="none" stroke="#d0d0d0" stroke-linecap="round"><path d="M9 9Q16 6 22 7T34 6Q39 5 42 1M15 8Q22 12 28 10T34 6" stroke-width="1.200"/><path d="M13 7Q10 5 12 1M17 7Q15 4 18 0M20 7q0-4 4-7M28 6l1-2" stroke-width="1.200"/></g>
        <path d="M2 6l5 4q4-2 6 1l1 2 3 2q-2 2-6 1-2 8 3 13 3 3 9 3 13 0 15 8l-1 5q-1 4 0 13h-4l-1-10-4-8q-7 2-13 0l-3 4-1 14H6l2-2-1-15Q0 34 0 27 0 20 6 16L5 12z" fill="#ccc"/>
      </svg>
      <div class="brand-text"><strong>3D溜溜网</strong><span>3D66.COM</span></div>
    </div>
  </div>
</main>

<div class="dialog" role="dialog" aria-labelledby="dlg">
  <h2 id="dlg">文字格式</h2>
  <div class="drow">
    <i class="sep"></i>
    <div class="combo raised style"><select aria-label="样式"><option>长仿宋体</option></select><svg class="arr"><use href="#down"/></svg></div>
    <i class="sep"></i>
    <div class="combo raised font song"><svg class="ic sm"><use href="#shx"/></svg><select aria-label="字体"><option>gbenor, gbcbig</option></select><svg class="arr"><use href="#down"/></svg></div>
    <button class="g blue" aria-label="注释性">A</button>
    <i class="sep"></i>
    <div class="combo field song"><input aria-label="文字高度" value="2.5"><svg class="arr"><use href="#down"/></svg></div>
    <button class="g"><b>B</b></button>
    <button class="g"><em>I</em></button>
    <button class="g"><span class="ul">U</span></button>
    <button class="g"><span class="ol">O</span></button>
    <button class="g" aria-label="放弃"><svg class="ic sm"><use href="#curvel"/></svg></button>
    <button class="g" aria-label="重做"><svg class="ic sm"><use href="#curver"/></svg></button>
    <button class="g frac" aria-label="堆叠"><span>b</span><span>a</span></button>
    <i class="sep"></i>
    <div class="combo raised color song"><i class="swatch"></i><select aria-label="颜色"><option>ByLayer</option></select><svg class="arr"><use href="#down"/></svg></div>
    <i class="sep"></i>
    <button class="pressed" aria-label="标尺"><svg class="ic"><use href="#ruler"/></svg></button>
    <i class="sep"></i>
    <button class="ok">确定</button>
    <i class="sep"></i>
    <button class="more" aria-label="选项"><svg class="ic"><use href="#opts"/></svg></button>
  </div>
  <div class="drow second">
    <button aria-label="栏"><svg class="ic"><use href="#bolt"/></svg><svg class="arr"><use href="#down"/></svg></button>
    <i class="sep"></i>
    <button aria-label="多行文字对正"><svg class="ic"><use href="#frameA"/></svg><svg class="arr"><use href="#down"/></svg></button>
    <i class="sep"></i>
    <button aria-label="段落"><svg class="ic"><use href="#para"/></svg></button>
    <i class="sep"></i>
    <div class="aligns">
      <button aria-label="左对齐"><svg class="ic"><use href="#al-l"/></svg></button>
      <button aria-label="居中"><svg class="ic"><use href="#al-c"/></svg></button>
      <button aria-label="右对齐"><svg class="ic"><use href="#al-l"/></svg></button>
      <button aria-label="对正"><svg class="ic"><use href="#al-l"/></svg></button>
      <button aria-label="分布"><svg class="ic"><use href="#dist"/></svg></button>
    </div>
    <i class="sep"></i>
    <button aria-label="行距"><svg class="ic"><use href="#spacing"/></svg><svg class="arr"><use href="#down"/></svg></button>
    <i class="sep"></i>
    <button aria-label="编号"><svg class="ic"><use href="#list"/></svg><svg class="arr"><use href="#down"/></svg></button>
    <i class="sep"></i>
    <button aria-label="插入字段"><svg class="ic"><use href="#field"/></svg></button>
    <i class="sep"></i>
    <button class="case" aria-label="大写"><span class="hi">a</span><span class="lo">A</span></button>
    <button class="case" aria-label="小写"><span class="hi">A</span><span class="lo">a</span></button>
    <i class="sep"></i>
    <button class="at" aria-label="符号">@<svg class="arr"><use href="#down"/></svg></button>
    <i class="sep"></i>
    <label class="num"><span class="lab"><em>0</em><em class="sl">/</em></span><input value="0.0000" aria-label="倾斜角度"><span class="spin"><button aria-label="增加"><svg class="arr"><use href="#up"/></svg></button><button aria-label="减少"><svg class="arr"><use href="#down"/></svg></button></span></label>
    <i class="sep"></i>
    <label class="num"><span class="lab small">a<span class="dot">•</span>b</span><input value="1.0000" aria-label="追踪"><span class="spin"><button aria-label="增加"><svg class="arr"><use href="#up"/></svg></button><button aria-label="减少"><svg class="arr"><use href="#down"/></svg></button></span></label>
    <i class="sep"></i>
    <label class="num"><span class="lab"><i class="oval"></i></span><input value="0.7000" aria-label="宽度因子"><span class="spin"><button aria-label="增加"><svg class="arr"><use href="#up"/></svg></button><button aria-label="减少"><svg class="arr"><use href="#down"/></svg></button></span></label>
  </div>
</div>
</body>
</html>
```
FILE: styles.css
```css
* { box-sizing: border-box; }
body {
  margin: 0;
  height: 100vh;
  overflow: hidden;
  display: flex;
  flex-direction: column;
  background: #646464;
  font: 12px/16px "Open Sans", "Noto Sans CJK SC", sans-serif;
  color: #222;
}
.defs { position: absolute; width: 0; height: 0; }
button, select, input { font: inherit; color: inherit; margin: 0; padding: 0; border: 0; background: none; }
button { display: flex; align-items: center; justify-content: center; }
h1, h2, h3 { margin: 0; font-size: 12px; font-weight: 400; }
.ic { width: 18px; height: 18px; flex: none; display: block; }
.ic.sm { width: 15px; height: 15px; }
.arr { width: 8px; height: 6px; flex: none; display: block; }

/* title bar and menu */
.top { display: grid; grid-template-columns: 28px 1fr; grid-template-rows: 22px 20px; flex: none; }
.logo {
  grid-row: 1 / 3;
  justify-content: flex-end;
  margin-bottom: 5px;
  background: linear-gradient(#b5b5b5, #6c6c6c);
  border: 1px solid #444;
  border-left: 0;
  color: #222;
  overflow: hidden;
}
.logo-a { width: 16px; height: 36px; margin-right: 3px; }
.titlebar {
  display: flex;
  align-items: stretch;
  border-bottom: 1px solid #555;
  background: linear-gradient(90deg, #7195a6 38%, #547889 42%, #5b7f90 52%, #7c949d 56%, #5a7c8d 62%, #527183 85%, #67848f 92%, #f5dcc0 93%, #fff2d2);
}
.qat { display: flex; align-items: center; padding: 0 2px 0 5px; background: linear-gradient(#8c8c8c, #a2a2a2); color: #555; }
.qat button { width: 22px; }
.qat .ic { opacity: .7; }
.qat .slim { width: 11px; }
.combo { display: flex; align-items: center; min-width: 0; padding: 0 5px; gap: 3px; background: #f3f3f3; border: 1px solid #b9c0c6; border-radius: 3px; color: #777; }
.combo > select, .combo > input { flex: 1; min-width: 0; width: 0; appearance: none; outline: 0; height: 16px; line-height: 16px; }
.combo .arr { color: #999; }
.ws-top { width: 164px; padding: 0 2px 0 0; gap: 0; background: linear-gradient(#ddd, #bcbcbc); border-color: #888; border-radius: 0; color: #555; }
.ws-top .arr, .qat-more .arr { color: #222; }
.qat-more { width: 15px; background: #8c8c8c; border: 1px solid #555; }
.title { flex: 1; display: flex; justify-content: center; align-items: center; gap: 15px; padding-left: 40px; color: #fff; white-space: nowrap; text-shadow: 0 0 1px #fff; }
.menu { display: flex; padding-left: 3px; background: linear-gradient(#969696, #5b5b5b); color: #fff; }
.menu button { padding: 0 10px; }

/* tool bars */
.bar { display: flex; flex: none; height: 20px; margin-bottom: 5px; background: #ececec; color: #555; box-shadow: 0 1px #888; }
.bar > button { width: 21px; flex: none; }
.bar > button.slim { width: 11px; }
.bar > .off { color: #999; }
.sep { width: 1px; margin: 1px 3px 1px 2px; flex: none; background: #999; }
.grip { width: 10px; flex: none; border: solid #555; border-width: 2px 3px; background: repeating-linear-gradient(#333 0 1px, #777 1px 2px); }
.grow { flex: 1; }
.c-color { flex-grow: 136; }
.c-type { flex-grow: 146; }
.c-weight { flex-grow: 115; }
.pad { padding-left: 15px; }
.ws { width: 159px; }
.layer { width: 275px; gap: 0; }
.layer select { padding-left: 1px; }
.swatch { width: 10px; height: 10px; flex: none; display: inline-block; margin: 0 2px; background: #fff; border: 1px solid #222; }
.song select, .song input { font-family: "Liberation Serif", serif; font-size: 11px; color: #444; }
.rule { display: inline-block; flex: none; width: 50px; height: 1px; background: #000; margin-right: 5px; }
.rule.wide { width: 54px; margin-right: 2px; }
.rule.thick { width: 53px; height: 4px; }
.rule.short { width: 32px; margin-right: 2px; }

/* work area */
.work { flex: 1; min-height: 0; display: flex; overflow: hidden; border-top: 1px solid #555; }
.props { width: 235px; flex: none; background: #f0f0f0; border-radius: 0 5px 0 0; margin-top: 1px; }
.props h2 { height: 20px; padding: 2px; background: #a0a0a0; border-radius: 0 5px 0 0; }
.pick { display: flex; height: 23px; margin: 10px 0 5px 9px; }
.raised { border: 1px solid #888; border-radius: 3px; background: linear-gradient(#f4f4f4, #d5d5d5); color: #222; }
.raised .arr { color: #111; }
.pick .combo { width: 146px; padding: 0 2px; margin-right: 3px; }
.pick button { width: 23px; border: 1px solid #bbb; border-right: 0; }
.props section { margin: 0 10px 3px 7px; }
.props h3 { display: flex; justify-content: space-between; align-items: center; height: 20px; padding: 0 9px 0 5px; font-weight: 700; background: linear-gradient(#b8b8b8, #9d9d9d); color: #111; }
.props table { width: calc(100% - 16px); margin-left: 16px; border-collapse: collapse; table-layout: fixed; }
.props tr { height: 19px; }
.props th, .props td { height: 19px; padding: 0 3px; border: 1px solid #999; font-weight: 400; text-align: left; line-height: 16px; white-space: nowrap; }
.props th { width: 82px; }
.props td { background: #fff; padding: 0 2px; }
.props td .swatch { margin: 0 5px 0 0; vertical-align: -1px; }
.props td .rule { vertical-align: 4px; margin-left: 2px; }
.props td .rule.thick { vertical-align: 2px; margin-left: 0; }
.props td.ro { background: #f0f0f0; }
.draw { width: 23px; flex: none; align-self: flex-start; margin-left: 5px; border: 1px solid #444; background: #eee; display: flex; flex-direction: column; align-items: center; }
.draw button { width: 20px; height: 20px; }
.hgrip { align-self: stretch; height: 7px; background: repeating-linear-gradient(90deg, #333 0 1px, #777 1px 2px); border: solid #555; border-width: 2px 3px; }
.draw .txt { font-size: 18px; }
.canvas { position: relative; flex: 1; min-width: 0; margin-left: 5px; background: #000; overflow: hidden; }
.drawing { position: absolute; inset: 0; width: 100%; height: 100%; }
.cad-text { font: 100 62px "Lato", sans-serif; fill: #fff; }
.watermark { position: absolute; right: 119px; bottom: 18px; width: 114px; color: #b4b4b4; }
.paw { position: absolute; left: 72px; top: -24px; width: 32px; height: 24px; }
.wm-big { font: 700 40px/38px "Liberation Sans", sans-serif; }
.wm-small { font-size: 24px; line-height: 28px; }
.brand { position: absolute; right: 0; bottom: 0; width: 200px; height: 95px; padding: 18px 10px 18px 13px; display: flex; gap: 8px; background: #222f55; color: #d4d4d4; }
.deer { width: 44px; height: 60px; flex: none; }
.brand-text { display: flex; flex-direction: column; white-space: nowrap; }
.brand-text strong { font: 500 29px/34px "Noto Sans CJK SC", sans-serif; }
.brand-text span { font: 200 23px/26px "DejaVu Sans Light", "DejaVu Sans", sans-serif; }

/* floating text format window */
.dialog { position: absolute; left: 220px; top: 124px; width: 714px; background: #f0f0f0; border: 5px solid #b4b4b4; padding: 1px; box-shadow: 0 0 0 1px #777; }
.dialog h2 { height: 17px; background: #9ab4d2; }
.drow { display: flex; align-items: center; height: 27px; }
.drow .arr { color: #222; }
.drow .sep { height: 18px; margin: 0 1px; }
.drow .combo { height: 20px; }
.drow .combo.raised { padding: 0 3px; }
.style { width: 98px; }
.drow .style select { padding-left: 16px; }
.font { width: 134px; }
.field { width: 57px; background: #fff; border-color: #ddd; padding: 0 3px; color: #222; }
.drow .song select, .drow .song input { font-size: 12px; color: #222; }
.color { width: 79px; }
.drow .color select { font-size: 11px; }
.drow .g { width: 22px; font: 18px/20px "Liberation Serif", serif; color: #444; }
.drow .blue { color: #2b74b8; font-size: 13px; }
.ul { border-bottom: 1px solid #2788df; line-height: 16px; }
.ol { border-top: 1px solid #2788df; line-height: 14px; }
.drow .frac { flex-direction: column; font-size: 10px; line-height: 10px; font-weight: 700; }
.frac span:first-child { border-bottom: 1px solid #444; }
.pressed { width: 23px; height: 20px; margin: 0 2px 0 5px; border: 1px solid #555; border-radius: 3px; background: #ccc; }
.ok { padding: 0 8px; }
.more { margin-left: 7px; }
.second { height: 32px; border-top: 1px solid #aaa; box-shadow: inset 0 1px #fff; }
.second > button { gap: 1px; padding: 0 2px; }
.second .sep { margin: 0 5px 0 4px; }
.aligns { display: flex; gap: 4px; padding-right: 3px; }
.second .case { width: 22px; font-weight: 700; font-size: 10px; color: #555; line-height: 12px; gap: 0; }
.case .hi { padding-bottom: 5px; }
.case .lo { padding-top: 5px; }
.second .at { font: 700 15px/16px "Liberation Serif", serif; gap: 3px; color: #333; }
.num { display: flex; align-items: center; }
.num .lab { width: 16px; text-align: center; font: 700 14px/16px "Liberation Serif", serif; color: #444; white-space: nowrap; }
.num .lab.small { font-size: 12px; width: 19px; }
.sl, .dot { color: #2788df; }
.num .dot { font-size: 8px; }
.num input { width: 47px; height: 18px; background: #fff; font: 10px/16px "Liberation Mono", monospace; }
.spin { display: flex; flex-direction: column; width: 14px; }
.spin button { height: 9px; border: 1px solid #bbb; background: #e8e8ee; }
.spin .arr { width: 5px; height: 4px; color: #4462b0; }
.oval { display: inline-block; width: 13px; height: 8px; border: solid #333; border-width: 2px 4px; border-radius: 50%; }
```
